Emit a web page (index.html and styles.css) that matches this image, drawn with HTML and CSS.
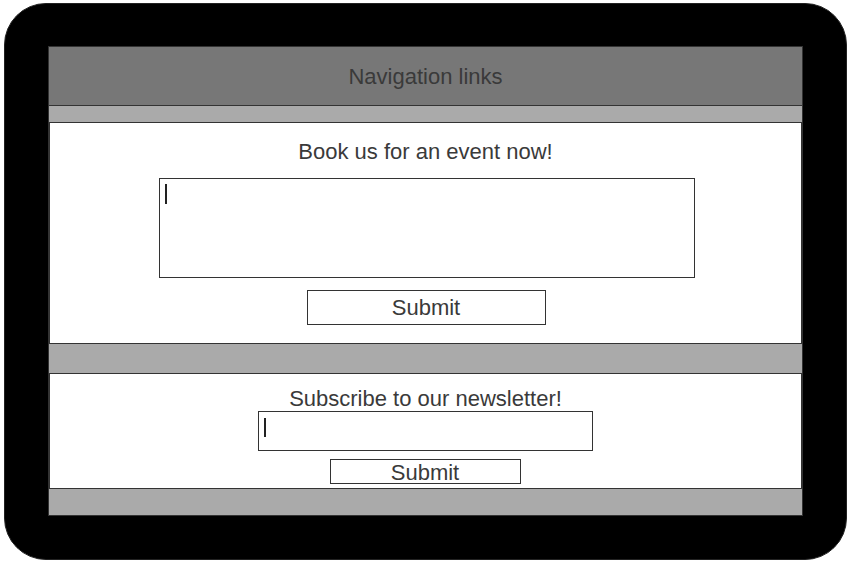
FILE: index.html
```html
<!DOCTYPE html>
<html>
<head>
<meta charset="utf-8">
<link rel="stylesheet" href="styles.css">
</head>
<body>
<div class="frame">
  <div class="screen">
    <div class="nav">Navigation links</div>
    <div class="section booking">
      <div class="heading">Book us for an event now!</div>
      <div class="field field-area"><span class="caret"></span></div>
      <div class="button button-big">Submit</div>
    </div>
    <div class="section newsletter">
      <div class="heading">Subscribe to our newsletter!</div>
      <div class="field field-line"><span class="caret"></span></div>
      <div class="button button-small">Submit</div>
    </div>
  </div>
</div>
</body>
</html>
```

FILE: styles.css
```css
* { box-sizing: border-box; }
html, body { margin: 0; padding: 0; background: #fff; }
body { font-family: "Liberation Sans", Arial, sans-serif; color: #3a3a3a; }

.frame {
  margin: 3px 0 0 4px;
  width: 843px;
  height: 557px;
  background: #000;
  border: 1px solid #222;
  border-radius: 42px;
  padding: 42px 43px 43px 43px;
}

.screen {
  width: 755px;
  height: 470px;
  background: #aaa;
  border: 1px solid #333;
  display: flex;
  flex-direction: column;
}

.nav {
  height: 59px;
  flex: none;
  background: #777;
  border-bottom: 1px solid #333;
  display: flex;
  align-items: center;
  justify-content: center;
  font-size: 22px;
  padding-top: 2px;
}

.section {
  background: #fff;
  border: 1px solid #333;
  display: flex;
  flex-direction: column;
  align-items: center;
  flex: none;
}

.heading { font-size: 22px; line-height: 24px; }

.booking { margin-top: 16px; height: 222px; padding-top: 17px; }
.booking .heading { margin-bottom: 14px; }

.newsletter { margin-top: 29px; height: 116px; padding-top: 13px; }
.newsletter .heading { margin-bottom: 0; }

.field {
  border: 1px solid #333;
  background: #fff;
  position: relative;
}
.field-area { width: 536px; height: 100px; margin-left: 3px; }
.field-line { width: 335px; height: 40px; margin-left: 0; }

.caret {
  position: absolute;
  width: 2px;
  background: #222;
}
.field-area .caret { left: 5px; top: 5px; height: 20px; }
.field-line .caret { left: 5px; top: 6px; height: 19px; }

.button {
  border: 1px solid #333;
  background: #fff;
  display: flex;
  align-items: center;
  justify-content: center;
  font-size: 22px;
}
.button-big { width: 239px; height: 35px; margin-top: 12px; margin-left: 1px; }
.button-small { width: 191px; height: 25px; margin-top: 8px; margin-left: -1px; padding-top: 2px; }
```
